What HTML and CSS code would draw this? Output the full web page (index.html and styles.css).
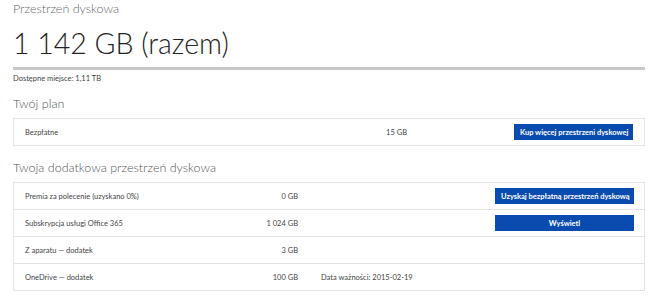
FILE: index.html
```html
<!DOCTYPE html>
<html lang="pl">
<head>
  <meta charset="UTF-8" />
  <title>Przestrzeń dyskowa</title>
  <link rel="stylesheet" href="styles.css">
</head>
<body>
  <div class="page">
    <div class="title">Przestrzeń dyskowa</div>
    <div class="total">1 142 GB (razem)</div>
    <div class="meter"></div>
    <div class="free">Dostępne miejsce: 1,11 TB</div>

    <div class="section-title plan-title">Twój plan</div>
    <div class="box plan">
      <div class="row">
        <span class="name">Bezpłatne</span>
        <span class="size">15 GB</span>
        <button class="btn">Kup więcej przestrzeni dyskowej</button>
      </div>
    </div>

    <div class="section-title extra-title">Twoja dodatkowa przestrzeń dyskowa</div>
    <div class="box extra">
      <div class="row">
        <span class="name">Premia za polecenie (uzyskano 0%)</span>
        <span class="size">0 GB</span>
        <button class="btn">Uzyskaj bezpłatną przestrzeń dyskową</button>
      </div>
      <div class="row">
        <span class="name">Subskrypcja usługi Office 365</span>
        <span class="size">1 024 GB</span>
        <button class="btn">Wyświetl</button>
      </div>
      <div class="row">
        <span class="name">Z aparatu — dodatek</span>
        <span class="size">3 GB</span>
      </div>
      <div class="row">
        <span class="name">OneDrive — dodatek</span>
        <span class="size">100 GB</span>
        <span class="note">Data ważności: 2015-02-19</span>
      </div>
    </div>
  </div>
</body>
</html>
```

FILE: styles.css
```css
* {
  box-sizing: border-box;
  margin: 0;
  padding: 0;
}

body {
  background: #ffffff;
  color: #444;
  font-family: Lato, "Open Sans", sans-serif;
}

.page {
  padding: 0 5px 0 13px;
}

.title {
  font-size: 12.5px;
  font-weight: 300;
  color: #666;
  line-height: 16px;
  padding-top: 1px;
}

.total {
  font-size: 28.5px;
  font-weight: 300;
  color: #222;
  line-height: 36px;
  margin-top: 8px;
}

.meter {
  height: 3px;
  background: #c8c8c8;
  margin-top: 6px;
}

.free {
  font-size: 7.5px;
  color: #444;
  line-height: 10px;
  margin-top: 4px;
}

.section-title {
  font-size: 12.5px;
  font-weight: 300;
  color: #555;
  line-height: 16px;
}

.plan-title {
  margin-top: 12px;
}

.extra-title {
  margin-top: 14px;
}

.box {
  border: 1px solid #e3e3e3;
  margin-top: 6px;
}

.row {
  display: flex;
  align-items: center;
  height: 26px;
  padding: 0 10px 0 11px;
  font-size: 7.5px;
  color: #444;
}

.row + .row {
  border-top: 1px solid #e3e3e3;
  height: 27px;
}

.name {
  flex: none;
}

.plan .row {
  padding-right: 11px;
}

.plan .name {
  width: 300px;
}

.plan .size {
  width: 82px;
  text-align: right;
}

.extra .name {
  width: 200px;
}

.extra .size {
  width: 73px;
  text-align: right;
}

.note {
  margin-left: 23px;
}

.btn {
  margin-left: auto;
  height: 16px;
  padding: 0 6px;
  border: none;
  background: #0a4bb0;
  color: #fff;
  font-family: inherit;
  font-size: 7.5px;
  font-weight: 700;
  white-space: nowrap;
}

.plan .btn {
  width: 119px;
}

.extra .btn {
  width: 139px;
}
```
